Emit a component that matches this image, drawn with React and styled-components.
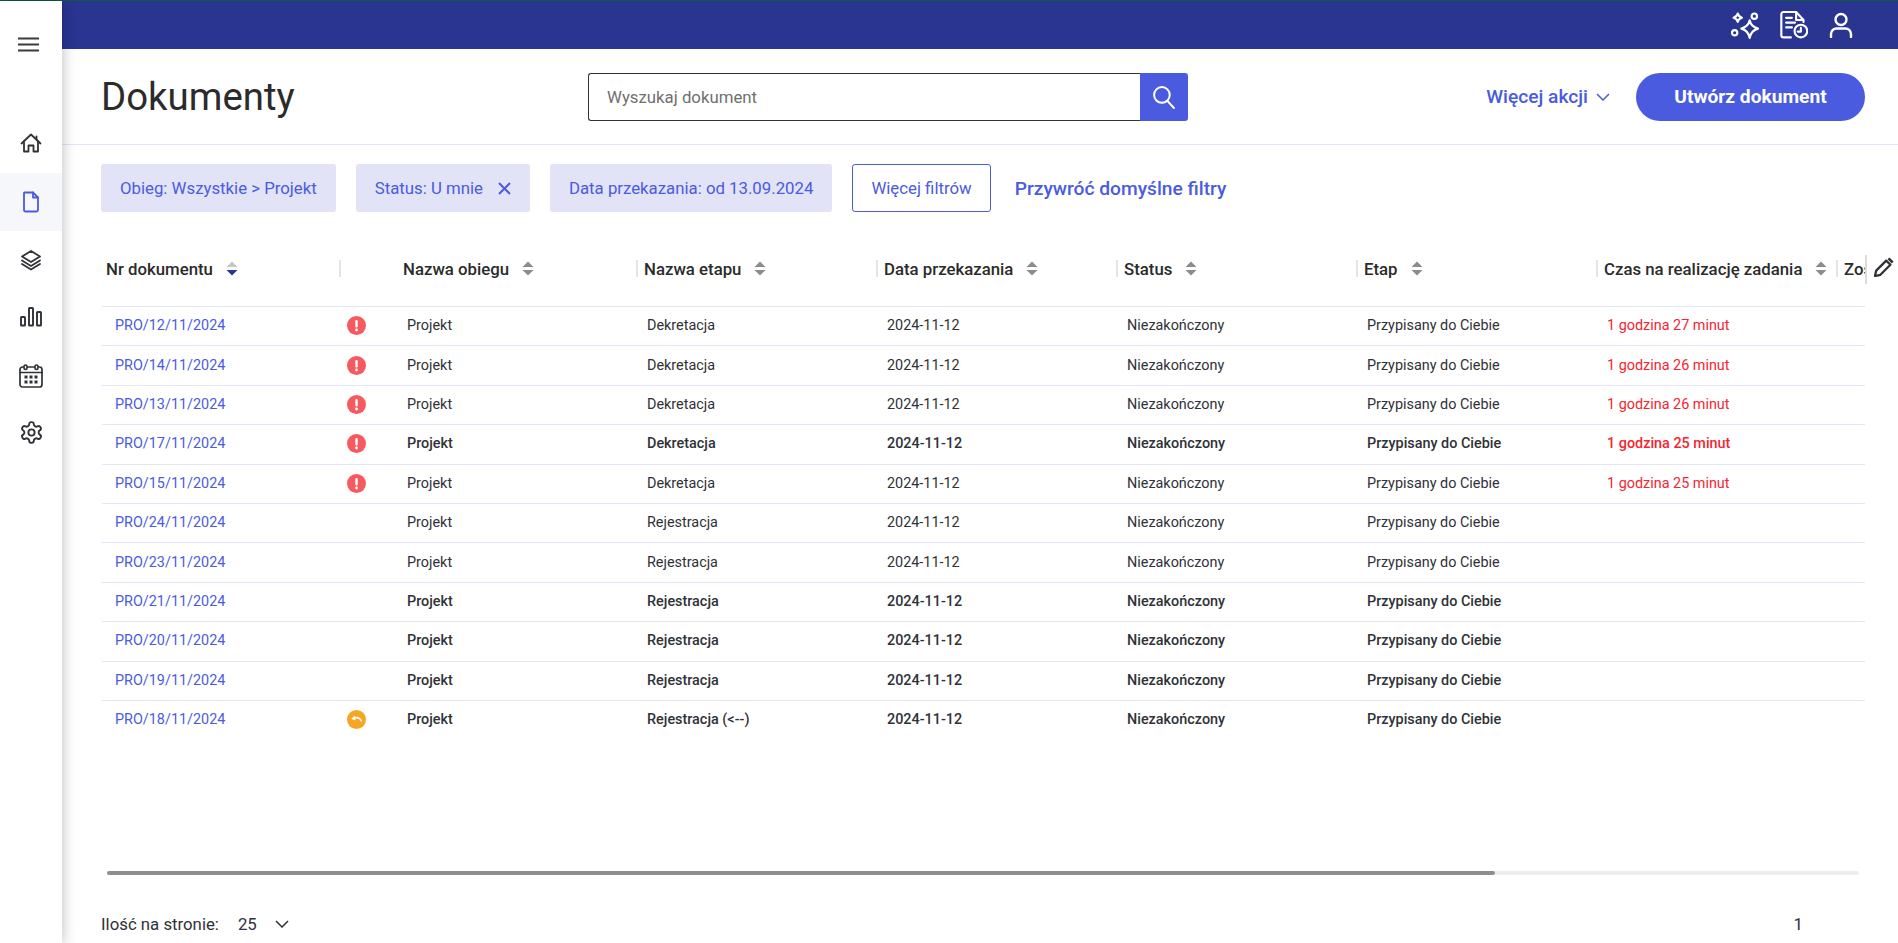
import React from "react";
import styled, { createGlobalStyle } from "styled-components";

const GlobalStyle = createGlobalStyle`
  html, body {
    margin: 0;
    padding: 0;
    background: #fff;
    overflow: hidden;
  }
  body {
    font-family: Roboto, "Liberation Sans", sans-serif;
    color: #2b2b2b;
  }
  * {
    box-sizing: border-box;
  }
`;

const Page = styled.div`
  display: flex;
  height: 943px;
  border-top: 1px solid #0d5c3c;
`;

const Sidebar = styled.aside`
  flex: 0 0 62px;
  background: #fff;
  box-shadow: 2px 0 12px rgba(0, 0, 0, 0.22);
  position: relative;
  z-index: 2;
  display: flex;
  flex-direction: column;
`;

const Burger = styled.div`
  height: 114px;
  padding-top: 36px;
  padding-left: 18px;
  flex: none;
`;

const NavItem = styled.div`
  height: 58px;
  display: flex;
  align-items: center;
  justify-content: center;
  padding-bottom: ${(props) => props.$lift || 0}px;
  background: ${(props) => (props.$active ? "#f6f7fb" : "transparent")};
  color: ${(props) => (props.$active ? "#4a5bdf" : "#2f3237")};
`;

const Main = styled.div`
  flex: 1;
  min-width: 0;
  display: flex;
  flex-direction: column;
`;

const TopBar = styled.div`
  height: 48px;
  flex: none;
  background: #2a3592;
  display: flex;
  align-items: center;
  justify-content: flex-end;
  gap: 21px;
  padding-right: 45px;
  color: #fff;
`;

const Header = styled.header`
  height: 96px;
  flex: none;
  display: flex;
  align-items: center;
  padding: 0 33px 0 39px;
  border-bottom: 1px solid #e4e4f7;
`;

const Title = styled.h1`
  flex: 0 0 487px;
  margin: 0;
  font-size: 38.4px;
  font-weight: 400;
  color: #2b2b2b;
`;

const SearchBox = styled.div`
  width: 600px;
  height: 48px;
  display: flex;
`;

const SearchInput = styled.div`
  flex: 1;
  display: flex;
  align-items: center;
  padding-left: 18px;
  border: 1px solid #333;
  border-right: none;
  border-radius: 3px 0 0 3px;
  font-size: 16.8px;
  color: #6f6f6f;
`;

const SearchButton = styled.div`
  width: 48px;
  display: flex;
  align-items: center;
  justify-content: center;
  background: #4a5bdf;
  border-radius: 0 3px 3px 0;
  color: #fff;
`;

const HeaderActions = styled.div`
  margin-left: auto;
  display: flex;
  align-items: center;
`;

const MoreActions = styled.div`
  display: flex;
  align-items: center;
  gap: 8px;
  font-size: 19.2px;
  font-weight: 500;
  color: #4a5bdf;
  margin-right: 26px;
`;

const CreateButton = styled.div`
  width: 229px;
  height: 48px;
  display: flex;
  align-items: center;
  justify-content: center;
  background: #4a5bdf;
  border-radius: 24px;
  color: #fff;
  font-size: 19.2px;
  font-weight: 700;
`;

const Filters = styled.div`
  display: flex;
  align-items: center;
  gap: 20px;
  padding: 19px 0 20px 39px;
  flex: none;
`;

const Chip = styled.div`
  height: 48px;
  display: flex;
  align-items: center;
  gap: 15px;
  padding: 0 19px;
  background: #e3e3f8;
  border-radius: 3px;
  font-size: 16.8px;
  color: #4a5bdf;
`;

const OutlineButton = styled.div`
  height: 48px;
  display: flex;
  align-items: center;
  padding: 0 18px;
  border: 1px solid #4a5bdf;
  border-radius: 3px;
  font-size: 16.8px;
  color: #4a5bdf;
`;

const ResetLink = styled.div`
  margin-left: 4px;
  font-size: 19.2px;
  font-weight: 500;
  color: #4a5bdf;
`;

const TableArea = styled.div`
  flex: 1;
  min-height: 0;
  display: flex;
  margin-left: 40px;
`;

const TableClip = styled.div`
  width: 1763px;
  overflow: hidden;
`;

const gridColumns = "238px 57px repeat(7, 240px)";

const HeadRow = styled.div`
  display: grid;
  grid-template-columns: ${gridColumns};
  height: 74px;
  align-items: center;
  padding-bottom: 1px;
`;

const HeadCell = styled.div`
  display: flex;
  align-items: center;
  gap: 13px;
  height: 17px;
  margin-left: ${(props) => (props.$first || props.$bare ? 0 : -1)}px;
  padding-left: ${(props) => (props.$first ? "4px" : "6px")};
  border-left: ${(props) => (props.$first || props.$bare ? "none" : "2px solid #e3e3f8")};
  font-size: 16.8px;
  font-weight: 500;
  white-space: nowrap;
  color: #2b2b2b;
`;

const Row = styled.div`
  display: grid;
  grid-template-columns: ${gridColumns};
  height: 39.4px;
  align-items: center;
  padding-bottom: 1px;
  border-top: 1px solid #e4e4f7;
  font-size: 14.4px;
  font-weight: ${(props) => (props.$bold ? 500 : 400)};
  color: #2f3237;
`;

const Cell = styled.div`
  padding-left: 10px;
  white-space: nowrap;
`;

const DocLink = styled(Cell)`
  padding-left: 13px;
  font-weight: 400;
  color: #4a5bdf;
`;

const TimeCell = styled(Cell)`
  color: #f7242f;
`;

const IconCell = styled.div`
  display: flex;
  padding-left: 7px;
`;

const EditColumn = styled.div`
  flex: 1;
  display: flex;
  align-items: flex-start;
  padding-top: 25px;
  padding-left: 9px;
  height: 74px;
  position: relative;
  color: #2f3237;
  &::before {
    content: "";
    position: absolute;
    left: 0;
    top: 23px;
    height: 29px;
    width: 2px;
    background: #dcdcdc;
  }
`;

const ScrollTrack = styled.div`
  flex: none;
  height: 4px;
  margin: 0 39px 0 45px;
  background: #ededed;
  border-radius: 2px;
`;

const ScrollThumb = styled.div`
  height: 100%;
  background: #8e8e8e;
  border-radius: 2px;
`;

const Footer = styled.footer`
  flex: none;
  height: 68px;
  display: flex;
  align-items: center;
  padding: 30px 95px 0 39px;
  font-size: 16.8px;
  color: #2f3237;
`;

const PageSizeValue = styled.span`
  margin-left: 19px;
  margin-right: 18px;
`;

const PageNumber = styled.span`
  margin-left: auto;
  color: #2b2f45;
`;

const SortIcon = ({ active }) => (
  <svg width="12" height="15" viewBox="0 0 12 15">
    <path d="M6 0.5 L11.5 6 H0.5 Z" fill={active ? "#c6c6c6" : "#8c8c8c"} />
    <path d="M6 14.5 L0.5 9 H11.5 Z" fill={active ? "#2a3592" : "#8c8c8c"} />
  </svg>
);

const Chevron = ({ width = 14, height = 8 }) => (
  <svg width={width} height={height} viewBox="0 0 14 8" fill="none" stroke="currentColor" strokeWidth="1.5">
    <path d="M1 1 L7 7 L13 1" />
  </svg>
);

const strokeProps = {
  fill: "none",
  stroke: "currentColor",
  strokeLinecap: "round",
  strokeLinejoin: "round",
};

const HomeIcon = () => (
  <svg width="22" height="22" viewBox="0 0 22 22" {...strokeProps} strokeWidth="1.8">
    <path d="M1.5 11.5 L11 2.5 L20.5 11.5" />
    <path d="M16.5 4.5 V7.5" />
    <path d="M4 9.5 V19.5 H8.5 V13.5 H13.5 V19.5 H18 V9.5" />
  </svg>
);

const DocIcon = () => (
  <svg width="18" height="22" viewBox="0 0 18 22" {...strokeProps} strokeWidth="1.8">
    <path d="M2.5 1.5 H11 L16 6.5 V19 A1.5 1.5 0 0 1 14.5 20.5 H3.5 A1.5 1.5 0 0 1 2 19 V2 Z" />
    <path d="M11 1.5 V6.5 H16" />
  </svg>
);

const LayersIcon = () => (
  <svg width="22" height="22" viewBox="0 0 22 22" {...strokeProps} strokeWidth="1.8">
    <path d="M11 2 L20 7.5 L11 13 L2 7.5 Z" />
    <path d="M2 11.5 L11 17 L20 11.5" />
    <path d="M2 15 L11 20.5 L20 15" />
  </svg>
);

const BarsIcon = () => (
  <svg width="22" height="20" viewBox="0 0 22 20" fill="none" stroke="currentColor" strokeWidth="1.9">
    <rect x="1" y="10" width="4" height="8.5" rx="0.6" />
    <rect x="9" y="1" width="4" height="17.5" rx="0.6" />
    <rect x="17" y="5" width="4" height="13.5" rx="0.6" />
  </svg>
);

const CalendarIcon = () => (
  <svg width="24" height="24" viewBox="0 0 24 24" {...strokeProps} strokeWidth="1.7">
    <rect x="1" y="3" width="22" height="20" rx="2.5" />
    <path d="M1 8.5 H23" />
    <rect x="5" y="1" width="3" height="4.5" rx="1.5" fill="#fff" />
    <rect x="16" y="1" width="3" height="4.5" rx="1.5" fill="#fff" />
    <g fill="currentColor" stroke="none">
      <rect x="5.5" y="11.5" width="3" height="3" />
      <rect x="10.5" y="11.5" width="3" height="3" />
      <rect x="15.5" y="11.5" width="3" height="3" />
      <rect x="5.5" y="16.5" width="3" height="3" />
      <rect x="10.5" y="16.5" width="3" height="3" />
      <rect x="15.5" y="16.5" width="3" height="3" />
    </g>
  </svg>
);

const GearIcon = () => (
  <svg width="25" height="25" viewBox="0 0 24 24" {...strokeProps} strokeWidth="1.8">
    <path d="M12.22 2h-.44a2 2 0 0 0-2 2v.18a2 2 0 0 1-1 1.73l-.43.25a2 2 0 0 1-2 0l-.15-.08a2 2 0 0 0-2.73.73l-.22.38a2 2 0 0 0 .73 2.73l.15.1a2 2 0 0 1 1 1.72v.51a2 2 0 0 1-1 1.74l-.15.09a2 2 0 0 0-.73 2.73l.22.38a2 2 0 0 0 2.73.73l.15-.08a2 2 0 0 1 2 0l.43.25a2 2 0 0 1 1 1.73V20a2 2 0 0 0 2 2h.44a2 2 0 0 0 2-2v-.18a2 2 0 0 1 1-1.73l.43-.25a2 2 0 0 1 2 0l.15.08a2 2 0 0 0 2.73-.73l.22-.39a2 2 0 0 0-.73-2.73l-.15-.08a2 2 0 0 1-1-1.74v-.5a2 2 0 0 1 1-1.74l.15-.09a2 2 0 0 0 .73-2.73l-.22-.38a2 2 0 0 0-2.73-.73l-.15.08a2 2 0 0 1-2 0l-.43-.25a2 2 0 0 1-1-1.73V4a2 2 0 0 0-2-2z" />
    <circle cx="12" cy="12" r="3" />
  </svg>
);

const SparkIcon = () => (
  <svg width="28" height="27" viewBox="1 1 27 26" {...strokeProps} strokeWidth="2.1">
    <path d="M19 9 C19.8 13 22 15.5 27 17 C22 18.5 19.8 21 19 26 C18.2 21 16 18.5 11 17 C16 15.5 18.2 13 19 9 Z" />
    <path d="M7.5 2.5 C7.9 4.5 9 5.7 11.5 6.5 C9 7.3 7.9 8.5 7.5 10.5 C7.1 8.5 6 7.3 3.5 6.5 C6 5.7 7.1 4.5 7.5 2.5 Z" />
    <circle cx="23.5" cy="5" r="2.6" />
    <circle cx="4.5" cy="21" r="2.6" />
  </svg>
);

const ReportIcon = () => (
  <svg width="28" height="28" viewBox="1 0.5 26 26.5" {...strokeProps} strokeWidth="2">
    <path d="M11 25.5 H4 A2 2 0 0 1 2 23.5 V3.5 A2 2 0 0 1 4 1.5 H16 L23 9 V11" />
    <path d="M16 2 V9 H22.5" />
    <path d="M6.5 7 H12 M6.5 11.5 H15 M6.5 16 H12" />
    <circle cx="20.5" cy="19.5" r="6" />
    <path d="M20.5 16.5 V20 H17.5" />
  </svg>
);

const UserIcon = () => (
  <svg width="24" height="26" viewBox="0 0 24 26" {...strokeProps} strokeWidth="2.4">
    <circle cx="12" cy="7.5" r="5.5" />
    <path d="M2 25 V22 A5.5 5.5 0 0 1 7.5 16.5 H16.5 A5.5 5.5 0 0 1 22 22 V25" />
  </svg>
);

const SearchIcon = () => (
  <svg width="24" height="24" viewBox="0 0 22 23" {...strokeProps} strokeWidth="1.9">
    <circle cx="9" cy="9.5" r="7.5" />
    <path d="M14.5 15.5 L20.5 22" />
  </svg>
);

const PencilIcon = () => (
  <svg width="20" height="20" viewBox="0 0 20 20">
    <path d="M2.2 13.6 L12.2 3.6 L16.4 7.8 L6.4 17.8 L1 19 Z" fill="none" stroke="currentColor" strokeWidth="2.3" strokeLinejoin="round" />
    <path d="M13.6 2.2 L15.4 0.4 L19.6 4.6 L17.8 6.4 Z" fill="currentColor" />
  </svg>
);

const AlertIcon = () => (
  <svg width="19" height="19" viewBox="0 0 19 19">
    <circle cx="9.5" cy="9.5" r="9.5" fill="#f65a5f" />
    <rect x="8.3" y="4" width="2.4" height="7.6" rx="1" fill="#fff" />
    <circle cx="9.5" cy="14" r="1.4" fill="#fff" />
  </svg>
);

const ReturnIcon = () => (
  <svg width="19" height="19" viewBox="0 0 19 19">
    <circle cx="9.5" cy="9.5" r="9.5" fill="#f6a623" />
    <path d="M7 8.2 C10 7.2 13 8 14.5 11.5" fill="none" stroke="#fff" strokeWidth="1.7" />
    <path d="M7.8 5.6 L4.4 8.8 L8.4 10.6 Z" fill="#fff" />
  </svg>
);

const CloseIcon = () => (
  <svg width="13" height="13" viewBox="0 0 13 13" fill="none" stroke="currentColor" strokeWidth="2">
    <path d="M1 1 L12 12 M12 1 L1 12" />
  </svg>
);

const columns = ["Nazwa obiegu", "Nazwa etapu", "Data przekazania", "Status", "Etap", "Czas na realizację zadania", "Zostało czasu"];

const rows = [
  { nr: "PRO/12/11/2024", icon: "alert", stage: "Dekretacja", time: "1 godzina 27 minut" },
  { nr: "PRO/14/11/2024", icon: "alert", stage: "Dekretacja", time: "1 godzina 26 minut" },
  { nr: "PRO/13/11/2024", icon: "alert", stage: "Dekretacja", time: "1 godzina 26 minut" },
  { nr: "PRO/17/11/2024", icon: "alert", stage: "Dekretacja", time: "1 godzina 25 minut", bold: true },
  { nr: "PRO/15/11/2024", icon: "alert", stage: "Dekretacja", time: "1 godzina 25 minut" },
  { nr: "PRO/24/11/2024", stage: "Rejestracja" },
  { nr: "PRO/23/11/2024", stage: "Rejestracja" },
  { nr: "PRO/21/11/2024", stage: "Rejestracja", bold: true },
  { nr: "PRO/20/11/2024", stage: "Rejestracja", bold: true },
  { nr: "PRO/19/11/2024", stage: "Rejestracja", bold: true },
  { nr: "PRO/18/11/2024", icon: "return", stage: "Rejestracja (<--)", bold: true },
];

const App = () => (
  <Page>
    <GlobalStyle />
    <Sidebar>
      <Burger>
        <svg width="21" height="16" viewBox="0 0 21 16" fill="none" stroke="#3a3a3a" strokeWidth="2">
          <path d="M0 1.5 H21 M0 7.5 H21 M0 13.5 H21" />
        </svg>
      </Burger>
      <NavItem $lift={2}><HomeIcon /></NavItem>
      <NavItem $active><DocIcon /></NavItem>
      <NavItem><LayersIcon /></NavItem>
      <NavItem $lift={2}><BarsIcon /></NavItem>
      <NavItem><CalendarIcon /></NavItem>
      <NavItem $lift={4}><GearIcon /></NavItem>
    </Sidebar>
    <Main>
      <TopBar>
        <SparkIcon />
        <ReportIcon />
        <UserIcon />
      </TopBar>
      <Header>
        <Title>Dokumenty</Title>
        <SearchBox>
          <SearchInput>Wyszukaj dokument</SearchInput>
          <SearchButton><SearchIcon /></SearchButton>
        </SearchBox>
        <HeaderActions>
          <MoreActions>Więcej akcji <Chevron /></MoreActions>
          <CreateButton>Utwórz dokument</CreateButton>
        </HeaderActions>
      </Header>
      <Filters>
        <Chip>Obieg: Wszystkie &gt; Projekt</Chip>
        <Chip>Status: U mnie <CloseIcon /></Chip>
        <Chip>Data przekazania: od 13.09.2024</Chip>
        <OutlineButton>Więcej filtrów</OutlineButton>
        <ResetLink>Przywróć domyślne filtry</ResetLink>
      </Filters>
      <TableArea>
        <TableClip>
          <HeadRow>
            <HeadCell $first>Nr dokumentu <SortIcon active /></HeadCell>
            <HeadCell />
            {columns.map((name) => (
              <HeadCell key={name} $bare={name === "Nazwa obiegu"}>{name} <SortIcon /></HeadCell>
            ))}
          </HeadRow>
          {rows.map((row) => (
            <Row key={row.nr} $bold={row.bold}>
              <DocLink>{row.nr}</DocLink>
              <IconCell>
                {row.icon === "alert" && <AlertIcon />}
                {row.icon === "return" && <ReturnIcon />}
              </IconCell>
              <Cell>Projekt</Cell>
              <Cell>{row.stage}</Cell>
              <Cell>2024-11-12</Cell>
              <Cell>Niezakończony</Cell>
              <Cell>Przypisany do Ciebie</Cell>
              <TimeCell>{row.time}</TimeCell>
            </Row>
          ))}
        </TableClip>
        <EditColumn><PencilIcon /></EditColumn>
      </TableArea>
      <ScrollTrack>
        <ScrollThumb style={{ width: `${(1388 / 1752) * 100}%` }} />
      </ScrollTrack>
      <Footer>
        Ilość na stronie:
        <PageSizeValue>25</PageSizeValue>
        <Chevron />
        <PageNumber>1</PageNumber>
      </Footer>
    </Main>
  </Page>
);

export default App;
